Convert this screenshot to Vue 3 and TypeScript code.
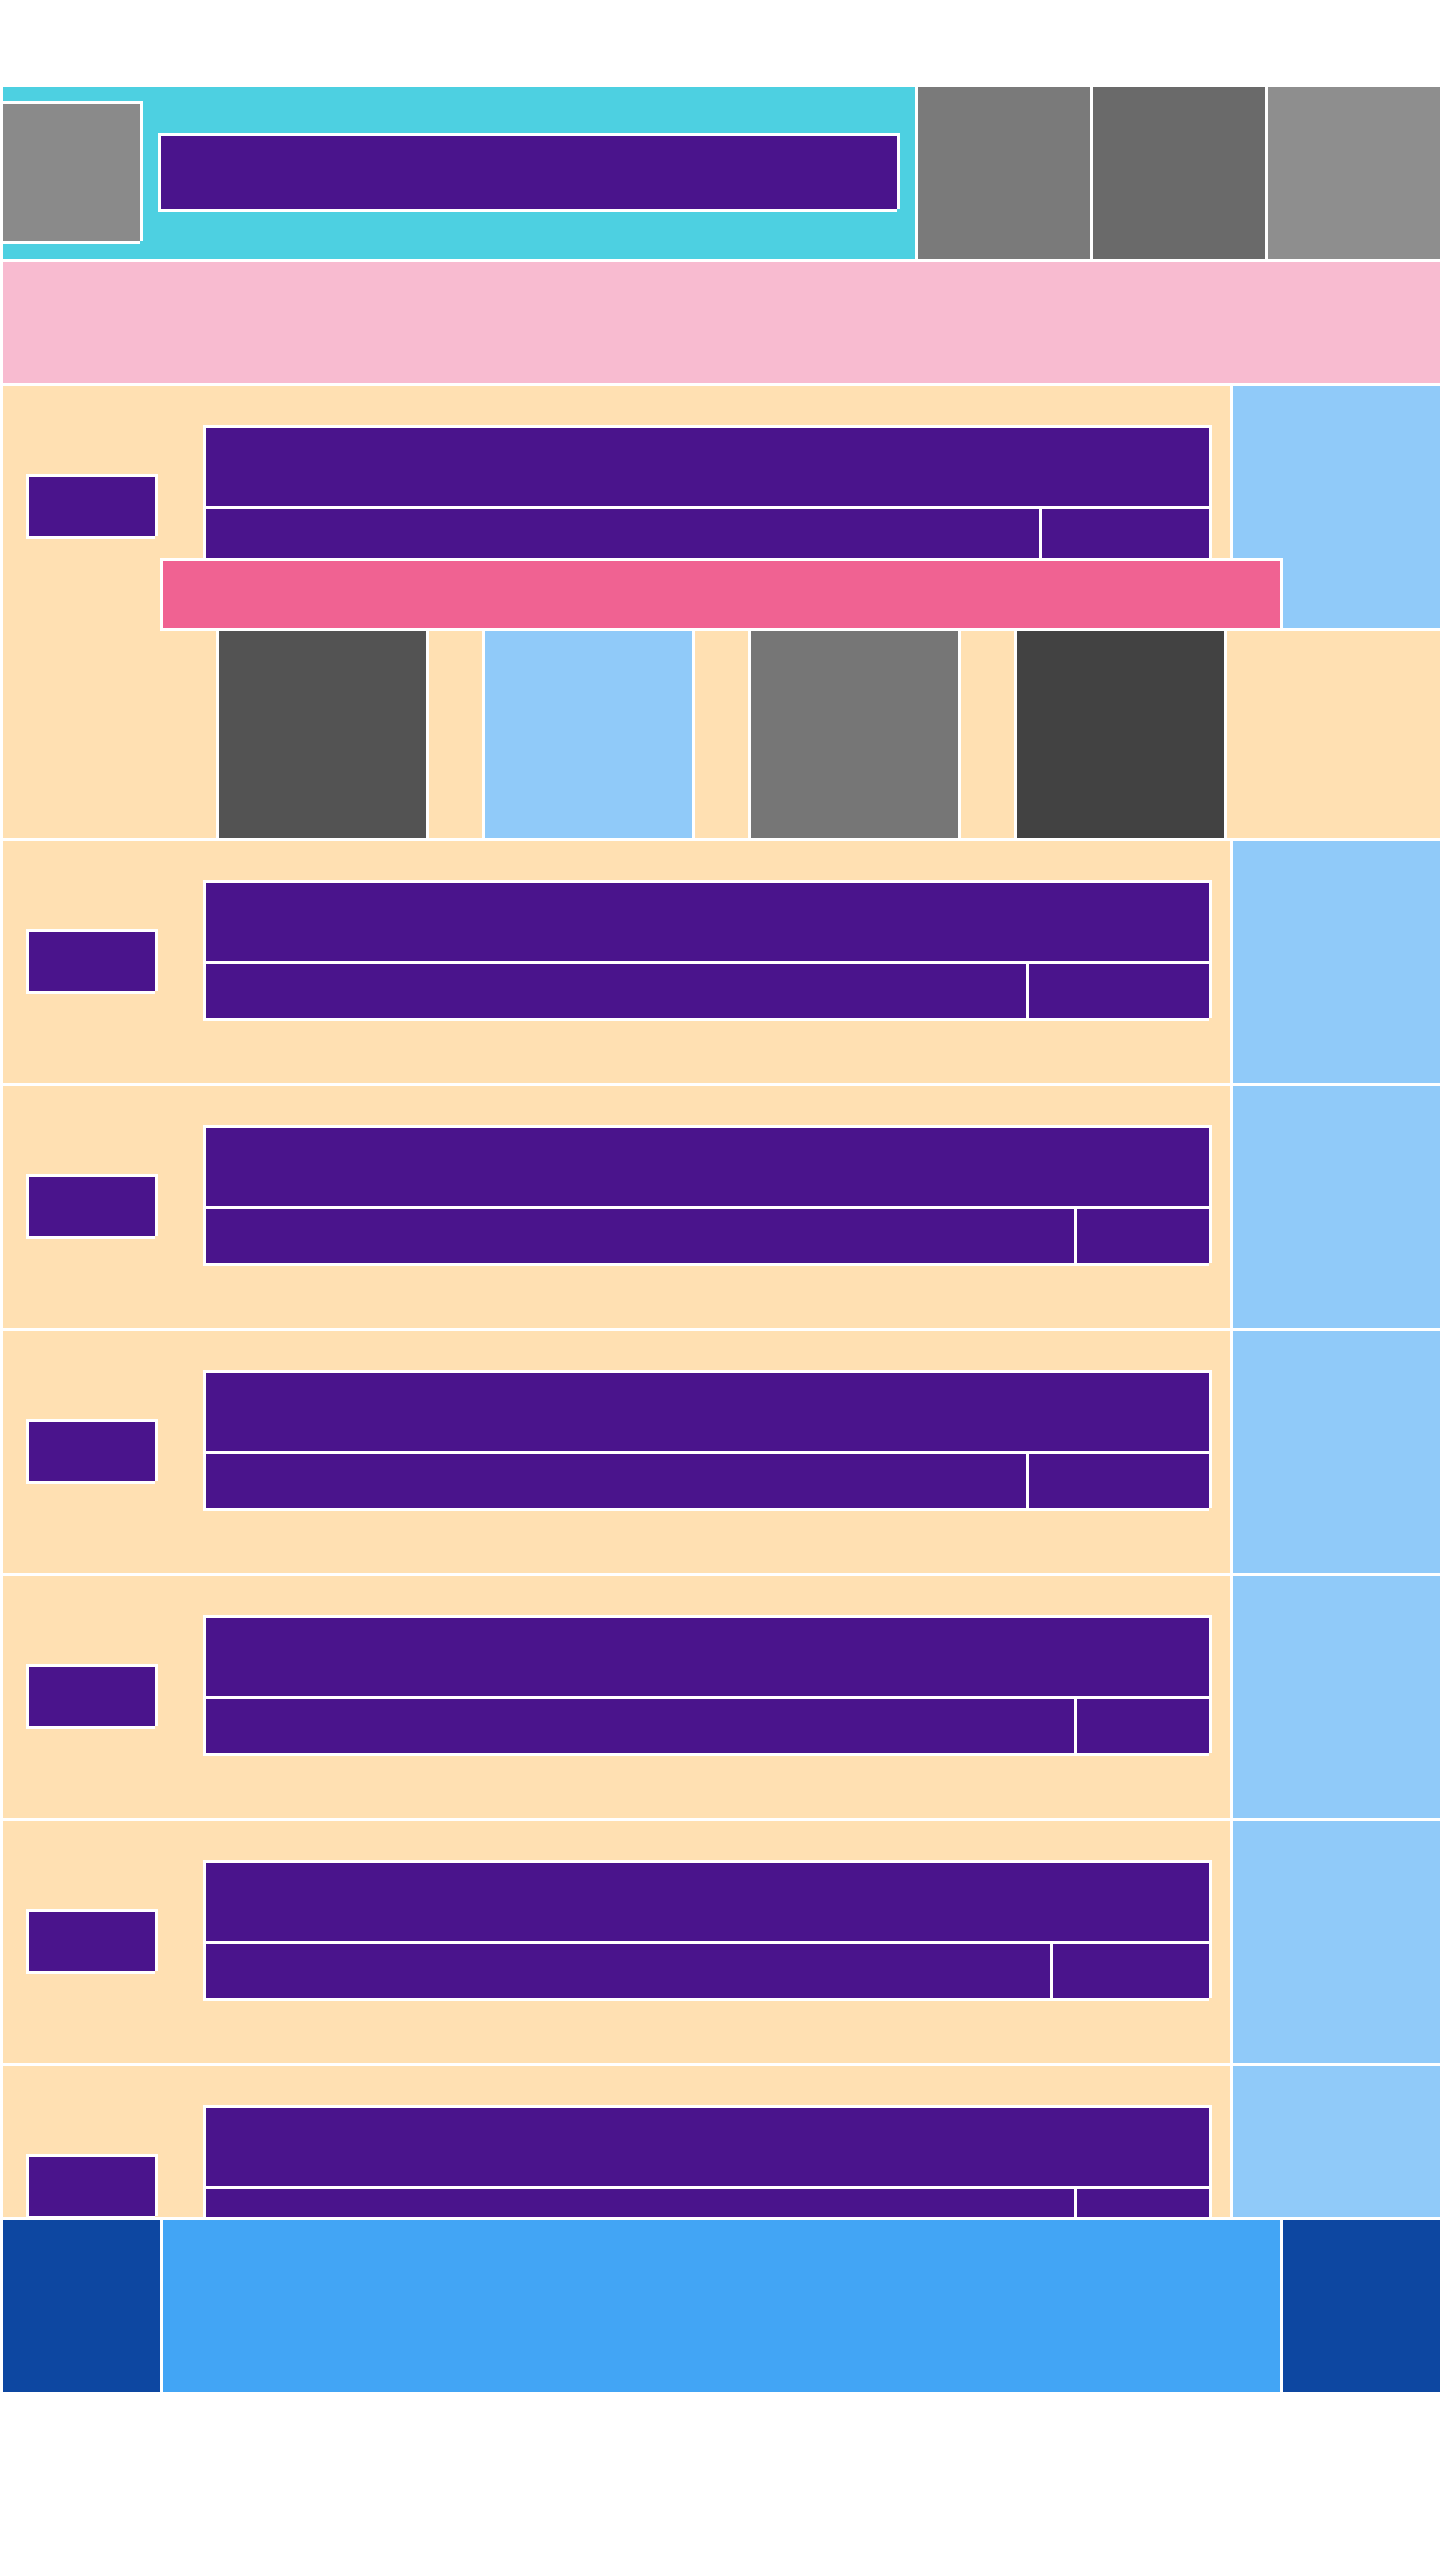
<script setup lang="ts">
interface Row {
  id: number
  metaWidth: number
  expanded: boolean
}

const rows: Row[] = [
  { id: 1, metaWidth: 170, expanded: true },
  { id: 2, metaWidth: 183, expanded: false },
  { id: 3, metaWidth: 135, expanded: false },
  { id: 4, metaWidth: 183, expanded: false },
  { id: 5, metaWidth: 135, expanded: false },
  { id: 6, metaWidth: 159, expanded: false },
  { id: 7, metaWidth: 135, expanded: false },
]

const barActions = ['#7a7a7a', '#6a6a6a', '#8e8e8e']
const rowActions = ['#535353', '#90caf9', '#767676', '#424242']
</script>

<template>
  <div class="screen">
    <header class="bar block">
      <div class="lead">
        <button class="back block" type="button" aria-label="Back"></button>
        <div class="heading block label"></div>
      </div>
      <button
        v-for="(color, i) in barActions"
        :key="i"
        class="bar-action block"
        type="button"
        :aria-label="`Action ${i + 1}`"
        :style="{ backgroundColor: color }"
      ></button>
    </header>

    <div class="banner block"></div>

    <ul class="list">
      <li v-for="row in rows" :key="row.id" class="item block">
        <div class="main">
          <div class="index block label"></div>
          <div class="texts">
            <div class="title block label"></div>
            <div class="details">
              <div class="subtitle block label"></div>
              <div class="meta block label" :style="{ width: `${row.metaWidth}px` }"></div>
            </div>
          </div>
          <button class="more block" type="button" :aria-label="`Options ${row.id}`"></button>
          <div v-if="row.expanded" class="overlay block"></div>
        </div>
        <div v-if="row.expanded" class="tray">
          <button
            v-for="(color, i) in rowActions"
            :key="i"
            class="tile block"
            type="button"
            :aria-label="`Shortcut ${i + 1}`"
            :style="{ backgroundColor: color }"
          ></button>
        </div>
      </li>
    </ul>

    <footer class="player">
      <button class="skip block" type="button" aria-label="Previous"></button>
      <div class="progress block"></div>
      <button class="skip block" type="button" aria-label="Next"></button>
    </footer>
  </div>
</template>

<style>
body {
  margin: 0;
  background: #ffffff;
}
</style>

<style scoped>
.screen {
  box-sizing: border-box;
  display: flex;
  flex-direction: column;
  height: 100vh;
  padding: 84px 0 168px;
  overflow: hidden;
  font-family: Roboto, sans-serif;
}

/* White rules: top and left as borders, right and bottom as hard shadows */
.block {
  box-sizing: border-box;
  margin: 0;
  padding: 0;
  border: 0 solid #ffffff;
  border-width: 3px 0 0 3px;
  border-radius: 0;
  box-shadow: 3px 0 #ffffff, 0 3px #ffffff;
}

.label {
  background: #4a148c;
}

.bar {
  display: flex;
  flex: none;
  height: 175px;
  border-width: 0;
  background: #4dd0e1;
  box-shadow: inset 0 3px #ffffff, inset 3px 0 #ffffff;
}

.lead {
  display: flex;
  flex: 1;
  align-items: center;
  gap: 18px;
  height: 140px;
  margin: 17px 18px 0 0;
}

.back {
  width: 140px;
  height: 140px;
  background: #8a8a8a;
}

.heading {
  flex: 1;
  height: 76px;
}

.bar-action {
  width: 175px;
}

.banner {
  flex: none;
  height: 124px;
  background: #f8bbd0;
}

.list {
  flex: 1;
  min-height: 0;
  margin: 0;
  padding: 0;
  overflow: hidden;
  list-style: none;
}

.item {
  border-width: 0;
  background: #ffe0b2;
  box-shadow: inset 0 3px #ffffff, inset 3px 0 #ffffff;
}

.main {
  position: relative;
  display: flex;
  height: 245px;
  padding-left: 26px;
}

.index {
  width: 129px;
  height: 62px;
  margin-top: 91px;
}

.texts {
  flex: 1;
  margin: 42px 21px 0 48px;
}

.title {
  height: 81px;
}

.details {
  display: flex;
}

.subtitle {
  flex: 1;
  height: 57px;
}

.meta {
  height: 57px;
}

.more {
  width: 210px;
  background: #90caf9;
}

.overlay {
  position: absolute;
  right: 160px;
  bottom: 0;
  left: 160px;
  height: 70px;
  background: #f06292;
}

.tray {
  display: flex;
  justify-content: space-evenly;
  padding: 0 160px;
}

.tile {
  width: 210px;
  height: 210px;
}

.player {
  position: relative;
  display: flex;
  flex: none;
  height: 175px;
}

.skip {
  width: 160px;
  background: #0d47a1;
}

.progress {
  flex: 1;
  background: #42a5f5;
}
</style>
